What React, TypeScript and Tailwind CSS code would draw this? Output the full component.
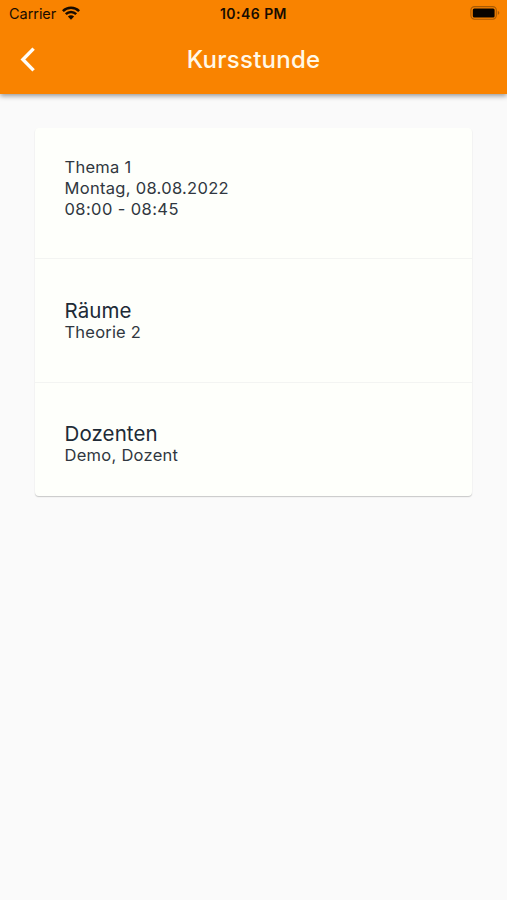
import type { ReactNode } from "react";

function WifiIcon() {
  return (
    <svg width="18" height="14" viewBox="0 0 18 14" fill="none" stroke="#180c00" strokeWidth="2.5">
      <path d="M0.9 5.1C5.4 0.6 12.6 0.6 17.1 5.1" />
      <path d="M3.8 8.2C6.7 5.3 11.3 5.3 14.2 8.2" />
      <path d="M9 13.7L5.9 10.5C7.6 8.8 10.4 8.8 12.1 10.5Z" fill="#180c00" stroke="none" />
    </svg>
  );
}

function BatteryIcon() {
  return (
    <svg width="31" height="14" viewBox="0 0 31 14" fill="none">
      <rect x="0.9" y="0.6" width="25.4" height="12.6" rx="3.6" stroke="#a85a04" strokeWidth="1.1" />
      <rect x="2.8" y="2.4" width="21.8" height="9" rx="1.5" fill="#080400" />
      <path d="M27.8 4.9C29.8 5.4 29.8 8.2 27.8 8.7Z" fill="#a85a04" />
    </svg>
  );
}

function StatusBar() {
  return (
    <div className="grid h-[26px] grid-cols-3 items-center px-[6px] text-[#180c00]">
      <div className="flex items-center gap-[6px] pl-[3px] text-[14.5px] leading-none tracking-[-0.05px]">
        <span className="pt-[3px]">Carrier</span>
        <WifiIcon />
      </div>
      <span className="pt-[2px] text-center text-[14px] font-semibold leading-none tracking-[0.45px]">10:46 PM</span>
      <div className="flex justify-end">
        <BatteryIcon />
      </div>
    </div>
  );
}

function Section({ title, className, children }: { title?: string; className: string; children: ReactNode }) {
  return (
    <section className={`px-[29.5px] ${className}`}>
      {title && <h2 className="text-[20.5px] leading-[22px] tracking-[0.1px] text-[#202a36]">{title}</h2>}
      <div className="text-[16.5px] leading-[20.8px] tracking-[0.27px]">{children}</div>
    </section>
  );
}

export default function App() {
  return (
    <main className="min-h-screen bg-[#fafafa] font-['Inter',sans-serif] text-[#303740]">
      <header className="h-[94px] bg-[#f98300] shadow-[0_2px_5px_rgba(0,0,0,0.4)]">
        <StatusBar />
        <div className="grid h-[67px] grid-cols-[60px_1fr_60px] items-center">
          <button aria-label="Zurück" className="pl-[20px]">
            <svg width="16" height="25" viewBox="0 0 16 25" fill="none" stroke="#fffdf8" strokeWidth="3.4">
              <path d="M13.6 1.6L2.9 12.5L13.6 23.4" />
            </svg>
          </button>
          <h1 className="pt-px text-center text-[24px] font-medium leading-none tracking-[0.25px] text-[#fff8e8]">Kursstunde</h1>
        </div>
      </header>
      <div className="mx-[35px] mt-[34px] h-[367.5px] rounded-[4px] bg-[#fefffb] shadow-[0_1px_1px_rgba(0,0,0,0.16),0_1px_2px_rgba(0,0,0,0.06)]">
        <Section className="h-[131px] border-b border-[#f3f4f2] pt-[29px]">
          <p>Thema 1</p>
          <p className="tracking-[0.3px]">Montag, 08.08.2022</p>
          <p className="tracking-[0.4px]">08:00 - 08:45</p>
        </Section>
        <Section title="Räume" className="h-[124px] border-b border-[#f3f4f2] pt-[41px]">
          <p className="tracking-[0.2px]">Theorie 2</p>
        </Section>
        <Section title="Dozenten" className="pt-[40px]">
          <p>Demo, Dozent</p>
        </Section>
      </div>
    </main>
  );
}
